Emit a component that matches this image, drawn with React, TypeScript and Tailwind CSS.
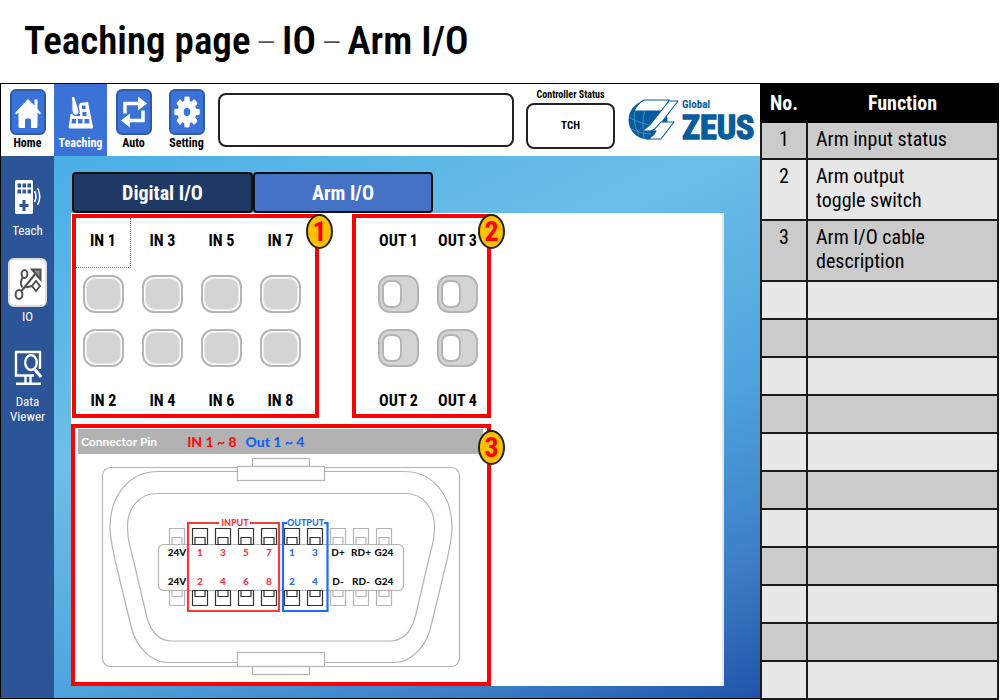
import type { ReactNode } from "react";

const DISPLAY = "font-['Roboto_Condensed','Liberation_Sans_Narrow',Roboto,sans-serif]";

function HomeIcon() {
  return (
    <svg viewBox="0 0 28 34" className="h-[34px] w-7" fill="white" aria-hidden="true">
      <path d="M14 4 1.500 17.500c-.8.9.2 2.300 1.300 1.500L4.500 17.500V31.500c0 .9.4 1.500 1.200 1.500H11v-8q0-1.500 1.500-1.500h3q1.500 0 1.500 1.500v8h5.300c.8 0 1.200-.6 1.200-1.500V17.500l1.700 1.500c1.100.8 2.100-.6 1.300-1.500L23.500 14V4.500H20.500V10.500Z" />
    </svg>
  );
}

function KeypadHandIcon() {
  return (
    <svg viewBox="0 0 28 36" className="h-9 w-7" aria-hidden="true">
      <path d="M3.500 20 9 19l4-10 8-1 5 25q.3 1.500-1.200 1.500H3q-1.500 0-1.300-1.500Z" fill="white" />
      <path d="M4.500 4.500C4 2 7.500 1.500 8.200 4L12 16.500c1 4-3.500 6.500-6 3.500C3.500 16 5.500 10.500 4.500 4.500Z" fill="white" stroke="#3b72d8" strokeWidth="1.200" />
      <g fill="#3b72d8">
        <path d="M15 11.500h3.500V15H15zM15.500 18h4v4h-4zM5 25h4v4.500H4.500zM11 25h4.500v4.500H11zM17.500 25H22l.4 4.500h-4.900zM10 20h3v2h-3z" />
      </g>
    </svg>
  );
}

function LoopIcon() {
  return (
    <svg viewBox="0 0 28 34" className="h-[34px] w-7" aria-hidden="true">
      <path d="M5 18.500V8.500H19M23 15.500v10H9" fill="none" stroke="white" strokeWidth="3.500" />
      <path d="M18 1.500 27 8.500 18 15.500zM10 18.500 1 25.500l9 7z" fill="white" />
    </svg>
  );
}

function GearIcon() {
  return (
    <svg viewBox="0 0 28 34" className="h-[34px] w-7" aria-hidden="true">
      <g transform="translate(14 17) scale(1 1.220)">
        <g fill="white">
          <circle r="9.500" />
          {[0, 45, 90, 135, 180, 225, 270, 315].map((a) => (
            <rect key={a} x="-2.700" y="-12.700" width="5.400" height="7" rx="1.400" transform={`rotate(${a})`} />
          ))}
        </g>
        <circle r="3.300" fill="#3b72d8" />
      </g>
    </svg>
  );
}

function PendantIcon() {
  return (
    <svg viewBox="0 0 28 36" className="h-9 w-7" aria-hidden="true">
      <rect x="1" y="1" width="18" height="34" rx="1.500" fill="white" />
      <g fill="#2b5597">
        <path d="M3.500 4.500h3.500v4H3.500zM8.500 4.500H12v4H8.500zM13.500 4.500H17v4h-3.500zM3.500 10.500h3.500v4H3.500zM8.500 10.500H12v4H8.500zM13.500 10.500H17v4h-3.500z" />
        <path d="M8.500 21h3v4h3v3h-3v4h-3v-4h-3v-3h3z" />
      </g>
      <path d="M20.500 12q3 5.500 0 11M23.500 9q4.500 8.500 0 17" fill="none" stroke="white" strokeWidth="1.600" />
    </svg>
  );
}

function FlowIcon() {
  return (
    <svg viewBox="0 0 28 36" className="h-9 w-7" fill="none" stroke="#505050" strokeWidth="2" aria-hidden="true">
      <ellipse cx="5" cy="29.500" rx="3.400" ry="4.400" />
      <ellipse cx="10.500" cy="9" rx="2.900" ry="3.900" />
      <path d="M8.500 12.500C6 17 6.500 20 8.500 22.500M7.500 26 22 8" />
      <path d="M18 4.500h8.500v10z" fill="#8a8a8a" />
      <path d="m22 16 4 5-4 5-4-5z" />
      <path d="M11.500 22.500l6.500-1.500" />
    </svg>
  );
}

function MonitorSearchIcon() {
  return (
    <svg viewBox="0 0 28 36" className="h-9 w-7" fill="none" stroke="white" aria-hidden="true">
      <path d="M20 25.500H2V2h24v17" strokeWidth="2.400" />
      <path d="M11.500 26v7M16.500 26v7M2 33.700h25" strokeWidth="2.400" />
      <ellipse cx="17" cy="12.500" rx="5.800" ry="7.500" strokeWidth="2.400" />
      <path d="m20.500 19 6.500 8" strokeWidth="3" />
    </svg>
  );
}

function ZeusLogo() {
  return (
    <svg viewBox="0 0 128 44" className="h-11 w-32 shrink-0 overflow-visible" role="img" aria-label="Global ZEUS">
      <ellipse cx="20" cy="22" rx="19.500" ry="19.500" fill="#075c9d" />
      <path d="M1 19q12 8 26 8M3 31q10 5 20 5M8 9q-5 13 3 28M21 3q-9 16-5 37" fill="none" stroke="#3f93cc" strokeWidth=".9" />
      <g fill="white" stroke="#075c9d" strokeWidth="1.100" strokeLinejoin="round">
        <path d="M16 2H41L36 13H6Q10 5 16 2Z" />
        <path d="M41 3h9L30 29q-3 3-8 4H13Q20 30 25 23Z" />
        <path d="M33 24h13L33 41H19q6-2 9-8h-3Z" />
      </g>
      <g fill="#075c9d" className="font-bold">
        <text x="54" y="10" className="text-[11px]">
          Global
        </text>
        <text x="54" y="41" stroke="#075c9d" strokeWidth="1.400" className="text-[34px]">
          ZEUS
        </text>
      </g>
    </svg>
  );
}

const topNav: { label: string; icon: ReactNode; active?: boolean }[] = [
  { label: "Home", icon: <HomeIcon /> },
  { label: "Teaching", icon: <KeypadHandIcon />, active: true },
  { label: "Auto", icon: <LoopIcon /> },
  { label: "Setting", icon: <GearIcon /> },
];

function TopBar() {
  return (
    <header className="flex h-[72px] bg-white">
      <nav className="flex">
        {topNav.map((item) => (
          <button
            key={item.label}
            className={`flex w-[53px] flex-col items-center pt-[5px] text-[12px] leading-4 font-bold ${item.active ? "bg-[#3b72d8] text-white" : "text-black"}`}
          >
            <span
              className={`flex h-[46px] w-9 items-center justify-center rounded-md ${item.active ? "" : "border-2 border-[#2f5aa8] bg-[#3b72d8]"}`}
            >
              {item.icon}
            </span>
            {item.label}
          </button>
        ))}
      </nav>
      <input
        aria-label="Message"
        readOnly
        className="mt-[9px] ml-[5px] h-[54px] min-w-0 flex-1 rounded-lg border-2 border-[#222] bg-white px-3"
      />
      <div className="mt-[3px] ml-3 flex w-[89px] flex-col items-center">
        <span className="text-[10px] leading-4 font-bold whitespace-nowrap">Controller Status</span>
        <output className="flex h-[46px] w-full items-center justify-center rounded-lg border-2 border-[#222] text-[11px] font-bold">
          TCH
        </output>
      </div>
      <div className="flex pt-[14px] pr-1 pl-[13px]">
        <ZeusLogo />
      </div>
    </header>
  );
}

function SideBar() {
  return (
    <nav className="flex w-[53px] shrink-0 flex-col items-center bg-[#2b5597] pt-[23px] text-[13px] leading-[15px] text-white">
      <button className="flex flex-col items-center gap-2">
        <PendantIcon />
        Teach
      </button>
      <button className="mt-5 flex flex-col items-center gap-[2px]">
        <span className="flex h-[49px] w-[39px] items-center justify-center rounded-md border-2 border-[#dcdcdc] bg-white">
          <FlowIcon />
        </span>
        IO
      </button>
      <button className="mt-[26px] flex flex-col items-center gap-2">
        <MonitorSearchIcon />
        <span>
          Data
          <br />
          Viewer
        </span>
      </button>
    </nav>
  );
}

function Badge({ children, low }: { children: ReactNode; low?: boolean }) {
  return (
    <span
      className={`absolute -right-[18px] z-10 flex h-[35px] w-[27px] items-center justify-center rounded-[50%] border-2 border-[#222] bg-[#ffc000] text-[28px] leading-none font-bold text-[#ff0000] ${low ? "top-[2px]" : "-top-1"}`}
    >
      {children}
    </span>
  );
}

const cols4 = "grid grid-cols-[repeat(4,55px)] gap-x-1 justify-items-center";
const cols2 = "grid grid-cols-[repeat(2,55px)] gap-x-1 justify-items-center pl-[15px]";

function Lamp({ n }: { n: number }) {
  return (
    <span role="img" aria-label={`IN ${n} off`} className="h-[38px] w-[41px] rounded-xl border-2 border-[#b5b5b5] bg-white p-px">
      <span className="block h-full w-full rounded-[10px] border border-[#ececec] bg-[#d4d4d4]" />
    </span>
  );
}

function InputPanel() {
  return (
    <section className="relative h-[204px] w-[247px] border-4 border-[#ff0000] bg-white text-[16px] leading-5 font-bold">
      <Badge>1</Badge>
      <div className={cols4}>
        {[1, 3, 5, 7].map((n) => (
          <span
            key={n}
            className={`flex h-[50px] w-full items-center justify-center pb-1 ${n === 1 ? "border-r border-b border-dotted border-[#777]" : ""}`}
          >
            IN {n}
          </span>
        ))}
      </div>
      <div className={`mt-[7px] gap-y-4 ${cols4}`}>
        {[1, 3, 5, 7, 2, 4, 6, 8].map((n) => (
          <Lamp key={n} n={n} />
        ))}
      </div>
      <div className={`mt-6 ${cols4}`}>
        {[2, 4, 6, 8].map((n) => (
          <span key={n}>IN {n}</span>
        ))}
      </div>
    </section>
  );
}

function OutputPanel() {
  return (
    <section className="relative h-[204px] w-[139px] border-4 border-[#ff0000] bg-white text-[16px] leading-5 font-bold">
      <Badge>2</Badge>
      <div className={cols2}>
        {[1, 3].map((n) => (
          <label key={n} htmlFor={`out-${n}`} className="flex h-[50px] items-center pb-1 whitespace-nowrap">
            OUT {n}
          </label>
        ))}
      </div>
      <div className={`mt-[7px] gap-y-4 ${cols2}`}>
        {[1, 3, 2, 4].map((n) => (
          <input
            key={n}
            id={`out-${n}`}
            type="checkbox"
            className="h-[38px] w-[41px] appearance-none rounded-xl border-2 border-[#b5b5b5] bg-[#d4d4d4] py-[3px] pl-[2px] before:block before:h-7 before:w-5 before:rounded-lg before:border-2 before:border-[#b5b5b5] before:bg-white checked:before:ml-[13px]"
          />
        ))}
      </div>
      <div className={`mt-6 ${cols2}`}>
        {[2, 4].map((n) => (
          <label key={n} htmlFor={`out-${n}`} className="whitespace-nowrap">
            OUT {n}
          </label>
        ))}
      </div>
    </section>
  );
}

const pins = [
  { top: "24V", bottom: "24V", kind: "other" },
  { top: "1", bottom: "2", kind: "in" },
  { top: "3", bottom: "4", kind: "in" },
  { top: "5", bottom: "6", kind: "in" },
  { top: "7", bottom: "8", kind: "in" },
  { top: "1", bottom: "2", kind: "out" },
  { top: "3", bottom: "4", kind: "out" },
  { top: "D+", bottom: "D-", kind: "other" },
  { top: "RD+", bottom: "RD-", kind: "other" },
  { top: "G24", bottom: "G24", kind: "other" },
];
const pinText: Record<string, string> = { other: "#111", in: "#f53b3b", out: "#2b72ee" };

function ConnectorDrawing() {
  return (
    <svg viewBox="0 0 412 228" className="block h-[228px] w-[412px] font-[Lato,sans-serif] text-[10px] font-black" role="img" aria-label="Arm I/O connector pin layout">
      <g fill="none" stroke="#b4b4b4" strokeWidth="1.200">
        <rect x="27.500" y="13.500" width="357" height="199" rx="8" />
        <path d="M83 17.500H329C358 17.500 377 42 377 73C377 84 375 92 372 106L355 176C350 193 336 208.500 319 208.500H93C76 208.500 62 193 57 176L40 106C37 92 35 84 35 73C35 42 54 17.500 83 17.500Z" />
        <path d="M82 39.500H330C348 39.500 359.500 54 359.500 73C359.500 84 358 90 355.500 98L340 164C336 177 328 187 315 187H97C84 187 76 177 72 164L56.500 98C54 90 52.500 84 52.500 73C52.500 54 64 39.500 82 39.500Z" />
        <g fill="white">
          <rect x="177.500" y="4.500" width="57" height="8" />
          <rect x="162.500" y="12.500" width="87" height="14" />
          <rect x="162.500" y="198.500" width="87" height="14" />
          <rect x="177.500" y="212.500" width="57" height="8" />
          <rect x="83.500" y="90.500" width="245" height="46" rx="5" />
        </g>
      </g>
      {pins.map((pin, i) => (
        <g key={i} transform={`translate(${94.5 + i * 23} 0)`}>
          <path
            d="M0 90.500V74.500H15V90.500M2.500 90.500V83.500H12.500V90.500M0 136.500V151.500H15V136.500M2.500 136.500V142.500H12.500V136.500M0 90.500H15M0 136.500H15"
            fill="none"
            stroke={pin.kind === "other" ? "#b4b4b4" : "#333"}
            strokeWidth="1.200"
          />
          <g fill={pinText[pin.kind]} textAnchor="middle">
            <text x="7.500" y="102">{pin.top}</text>
            <text x="7.500" y="131">{pin.bottom}</text>
          </g>
        </g>
      ))}
      <g fill="none" strokeWidth="2.200">
        <path d="M144 69H113V157H204V69H175" stroke="#f53b3b" />
        <path d="M212 69H208V157H252.500V69H249" stroke="#1f6cf5" />
      </g>
      <g textAnchor="middle" className="text-[9px]">
        <text x="160" y="72" fill="#f53b3b">INPUT</text>
        <text x="230.500" y="72" fill="#2b72ee">OUTPUT</text>
      </g>
    </svg>
  );
}

function ConnectorPanel() {
  return (
    <section className="relative w-[420px] border-4 border-[#ff0000] bg-white">
      <Badge low>3</Badge>
      <h2 className="mt-px mr-1 ml-[3px] flex h-[25px] items-center bg-[#b2b2b2] pl-[3px] font-[Lato,sans-serif] text-[12px] font-bold text-white">
        Connector Pin
        <span className="ml-[30px] text-[14px] font-black text-[#f51414]">IN 1 ~ 8</span>
        <span className="ml-[9px] text-[14px] font-black text-[#1462f5]">Out 1 ~ 4</span>
      </h2>
      <ConnectorDrawing />
    </section>
  );
}

function Controller() {
  return (
    <div className="flex min-w-0 flex-1 flex-col border-y border-l border-black">
      <TopBar />
      <div className="flex flex-1">
        <SideBar />
        <main className="flex flex-1 flex-col bg-[linear-gradient(155deg,#4aaee6_0%,#6cbfe8_36%,#4fa4de_62%,#3c7ec6_84%,#2153a9_100%)] pt-4 pr-9 pb-3 pl-[17px]">
          <div className="flex pl-px text-[20px] font-bold text-white" role="tablist">
            <button role="tab" aria-selected="false" className="h-[41px] w-[181px] rounded border-2 border-[#111] bg-[#203864]">
              Digital I/O
            </button>
            <button role="tab" aria-selected="true" className="h-[41px] w-[180px] rounded border-2 border-[#111] bg-[#4472c4]">
              Arm I/O
            </button>
          </div>
          <div className="flex flex-1 flex-col items-start gap-[6px] border-r-2 border-[#e8e8e8] bg-white pt-px">
            <div className="flex gap-[33px] pl-px">
              <InputPanel />
              <OutputPanel />
            </div>
            <ConnectorPanel />
          </div>
        </main>
      </div>
    </div>
  );
}

const rows = [
  { no: "1", text: ["Arm input status"] },
  { no: "2", text: ["Arm output", "toggle switch"] },
  { no: "3", text: ["Arm I/O cable", "description"] },
  ...Array.from({ length: 11 }, () => ({ no: "", text: [] as string[] })),
];

function FunctionTable() {
  return (
    <table className="mr-px w-[239px] shrink-0 table-fixed border-collapse text-[20px] leading-6">
      <thead>
        <tr className="h-[38px] bg-black text-white">
          <th className="w-[46px] border-2 border-black">No.</th>
          <th className="border-2 border-black">Function</th>
        </tr>
      </thead>
      <tbody>
        {rows.map((row, i) => (
          <tr key={i} className={`align-top ${row.text.length > 1 ? "h-[61px]" : row.no ? "h-[37px]" : "h-[38px]"} ${i % 2 ? "bg-[#e7e7e7]" : "bg-[#cbcbcb]"}`}>
            <td className="border-2 border-[#1a1a1a] pt-1 text-center">{row.no}</td>
            <td className="border-2 border-[#1a1a1a] pt-1 pl-2">
              {row.text.map((line) => (
                <span key={line} className="block">
                  {line}
                </span>
              ))}
            </td>
          </tr>
        ))}
      </tbody>
    </table>
  );
}

export default function App() {
  return (
    <div className={`flex min-h-screen flex-col bg-white text-black ${DISPLAY}`}>
      <h1 className="flex h-[83px] items-center gap-2 pl-6 text-[39px] leading-none font-semibold">
        Teaching page
        <span className="pb-1 font-['Liberation_Sans',sans-serif] text-[28px] font-normal text-[#555]">–</span>
        IO
        <span className="pb-1 font-['Liberation_Sans',sans-serif] text-[28px] font-normal text-[#555]">–</span>
        Arm I/O
      </h1>
      <div className="flex items-start">
        <Controller />
        <FunctionTable />
      </div>
    </div>
  );
}
